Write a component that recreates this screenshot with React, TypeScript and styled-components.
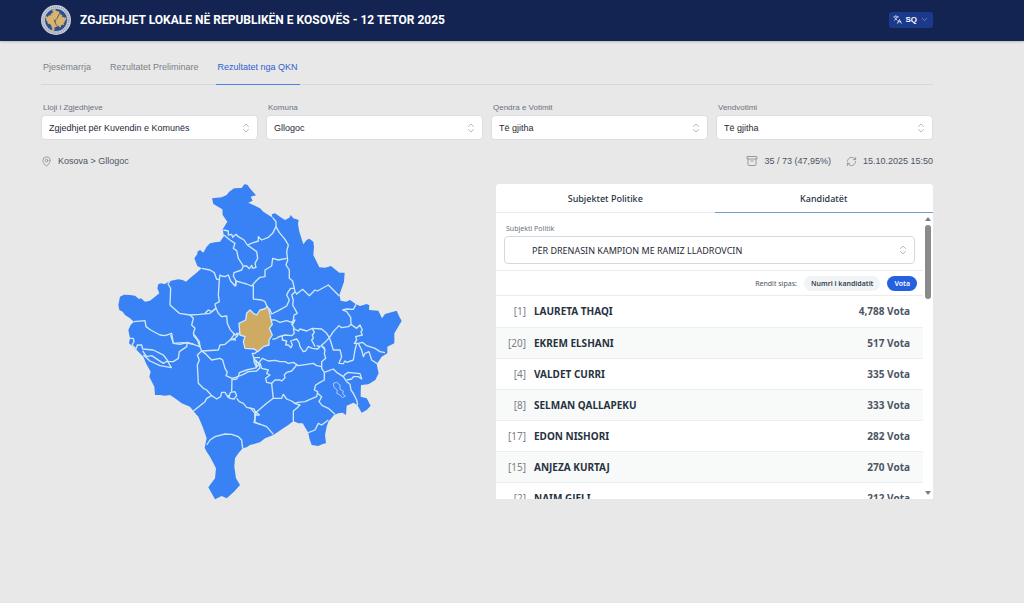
import React from "react";
import styled, { createGlobalStyle, css } from "styled-components";
import { Archive, ChevronDown, ChevronsUpDown, Languages, MapPin, RefreshCw } from "lucide-react";

const GlobalStyle = createGlobalStyle`
  *, *::before, *::after { box-sizing: border-box; }
  body {
    margin: 0;
    background: #e8e8e8;
    color: #1f2937;
    font-family: "Liberation Sans", Arial, sans-serif;
    font-size: 9px;
  }
  button, select { font: inherit; color: inherit; }
`;

const gutters = css`
  padding-left: 41px;
  padding-right: 91px;
`;

const Header = styled.header`
  ${gutters}
  display: flex;
  align-items: center;
  gap: 9px;
  height: 41px;
  padding-bottom: 2px;
  background: #142452;
  box-shadow: 0 1px 2px rgba(0, 0, 0, 0.2);
`;

const Logo = styled.svg`
  width: 30px;
  height: 30px;
  flex: none;
`;

const Title = styled.h1`
  margin: 0;
  flex: 1;
  color: #fff;
  font-family: Roboto, "Liberation Sans", sans-serif;
  font-size: 12px;
  line-height: 16px;
  font-weight: 700;
`;

const LanguageButton = styled.button`
  display: flex;
  align-items: center;
  gap: 3px;
  height: 16px;
  padding: 0 4px;
  border: 0;
  border-radius: 3px;
  background: #1c3a8c;
  color: #fff;
  font-size: 8px;
  font-weight: 700;
  svg:last-child { color: #7f93cf; }
`;

const Page = styled.main`
  ${gutters}
  padding-top: 12px;
`;

const Tabs = styled.nav`
  display: flex;
  gap: 15px;
  height: 32px;
  border-bottom: 1px solid #d6d8dc;
`;

const TabLink = styled.a<{ $active?: boolean }>`
  height: 32px;
  padding: 0 2px;
  line-height: 28px;
  text-decoration: none;
  color: ${(p) => (p.$active ? "#2f5fd0" : "#7b8087")};
  border-bottom: 1px solid ${(p) => (p.$active ? "#4f83e6" : "transparent")};
`;

const Filters = styled.div`
  display: grid;
  grid-template-columns: repeat(4, 1fr);
  gap: 8px;
  margin-top: 18px;
`;

const Field = styled.div`
  display: flex;
  flex-direction: column;
  gap: 2px;
`;

const FieldLabel = styled.label<{ $small?: boolean }>`
  padding-left: 2px;
  font-size: ${(p) => (p.$small ? 7 : 8)}px;
  line-height: 10px;
  color: #6b7280;
`;

const SelectBox = styled.div`
  position: relative;
  svg {
    position: absolute;
    right: 6px;
    top: 50%;
    margin-top: -6px;
    color: #9ca3af;
    pointer-events: none;
  }
`;

const Select = styled.select<{ $roomy?: boolean }>`
  display: block;
  appearance: none;
  width: 100%;
  height: ${(p) => (p.$roomy ? 28 : 25)}px;
  padding: 0 24px 0 ${(p) => (p.$roomy ? 27 : 7)}px;
  border: 1px solid ${(p) => (p.$roomy ? "#d5d8dd" : "#dcdee1")};
  border-radius: 4px;
  background: #fff;
`;

const InfoRow = styled.div`
  display: flex;
  align-items: center;
  gap: 15px;
  height: 16px;
  margin-top: 13px;
  color: #4b5563;
`;

const InfoItem = styled.span<{ $grow?: boolean }>`
  display: flex;
  align-items: center;
  gap: 6px;
  flex: ${(p) => (p.$grow ? 1 : "none")};
  svg { color: #7b8087; }
`;

const Results = styled.div`
  display: grid;
  grid-template-columns: 1fr 1fr;
  align-items: start;
  gap: 18px;
  margin-top: 15px;
`;

const MapFrame = styled.div`
  display: flex;
  justify-content: center;
  align-items: flex-start;
  svg { width: 300px; max-width: 100%; height: auto; }
`;

const Card = styled.section`
  border-radius: 4px 4px 0 0;
  overflow: hidden;
  background: #fff;
  font-family: "Noto Sans", sans-serif;
`;

const CardTabs = styled.div`
  display: grid;
  grid-template-columns: 1fr 1fr;
`;

const CardTab = styled.button<{ $active?: boolean }>`
  height: 29px;
  padding: 0;
  border: 0;
  border-bottom: 1px solid ${(p) => (p.$active ? "#6f9bd1" : "#e7e9ec")};
  background: #fff;
  color: #28323f;
  font-weight: 500;
`;

const Scroller = styled.div`
  display: flex;
  height: 286px;
`;

const ScrollContent = styled.div`
  flex: 1;
  overflow-y: auto;
  scrollbar-width: none;
`;

const ScrollTrack = styled.div`
  display: flex;
  flex-direction: column;
  align-items: center;
  width: 10px;
  padding: 4px 0;
`;

const Arrow = styled.span<{ $down?: boolean }>`
  border: 3px solid transparent;
  ${(p) => (p.$down ? "border-top: 4px solid #7d7d7d; border-bottom: 0; margin-top: auto;" : "border-bottom: 4px solid #7d7d7d; border-top: 0;")}
`;

const Thumb = styled.span`
  width: 6px;
  height: 74px;
  margin-top: 4px;
  border-radius: 3px;
  background: #8a8a8a;
`;

const SubjectField = styled(Field)`
  padding: 11px 8px 6px;
  border-bottom: 1px solid #e9ebed;
`;

const SortRow = styled.div`
  display: flex;
  align-items: center;
  justify-content: flex-end;
  gap: 7px;
  height: 25px;
  padding-right: 6px;
  border-bottom: 1px solid #e9ebed;
  font-size: 7px;
  color: #4b5563;
`;

const Pill = styled.button<{ $active?: boolean }>`
  height: 15px;
  padding: 0 7px;
  border: 0;
  border-radius: 8px;
  font-weight: 600;
  line-height: 15px;
  background: ${(p) => (p.$active ? "#2560e0" : "#f1f4f5")};
  color: ${(p) => (p.$active ? "#fff" : "#374151")};
`;

const Candidates = styled.table`
  width: 100%;
  border-collapse: collapse;
  font-size: 10px;
`;

const CandidateRow = styled.tr`
  height: 31px;
  border-bottom: 1px solid #eceff0;
  &:nth-child(even) { background: #f8faf9; }
`;

const NumberCell = styled.td`
  width: 30px;
  padding: 0;
  text-align: right;
  color: #7b8087;
`;

const NameCell = styled.th`
  padding: 0 8px;
  text-align: left;
  font-weight: 700;
  color: #28323f;
`;

const VotesCell = styled.td`
  padding: 0 13px 0 0;
  text-align: right;
  font-weight: 700;
  color: #4b5563;
`;

const OUTLINE =
  "306,55 335,52 350,45 357,36 372,25 395,24 403,13 412,14 422,28 438,46 422,50 428,62 415,68 430,75 450,85 460,95 488,113 " +
  "485,103 495,100 512,112 525,120 538,113 542,105 550,115 566,120 564,132 568,155 580,193 590,180 598,176 610,185 612,200 610,225 628,262 645,263 663,258 " +
  "688,278 704,278 702,305 688,345 692,362 708,365 720,360 738,373 750,378 770,372 778,376 777,390 805,392 816,415 825,402 860,392 868,410 " +
  "875,423 862,445 853,460 853,490 832,500 832,520 815,530 800,553 806,580 796,600 775,613 753,615 752,635 752,650 770,655 782,677 770,690 755,698 " +
  "742,675 730,668 720,673 710,677 708,705 698,698 685,700 672,705 655,725 650,740 645,765 648,790 638,792 625,798 605,795 598,775 595,758 578,730 565,730 " +
  "550,723 535,735 520,745 490,765 465,775 450,787 420,795 410,802 398,805 385,820 375,835 373,860 378,895 390,915 372,935 350,955 335,948 315,958 " +
  "305,940 295,922 315,895 318,865 308,845 300,830 290,815 284,803 290,775 278,740 265,710 250,693 240,680 215,670 195,655 180,645 165,647 150,645 135,645 " +
  "133,620 118,590 122,575 108,550 100,530 80,510 57,490 60,475 55,450 62,435 72,425 60,415 45,405 38,395 28,390 25,375 30,350 42,344 60,345 75,347 88,358 " +
  "92,354 105,365 120,362 135,350 148,340 142,325 145,312 155,310 163,313 180,303 205,298 218,300 228,305 245,290 258,280 275,265 262,258 253,235 262,222 262,215 " +
  "270,210 280,218 290,200 300,190 315,187 330,185 342,168 338,148 352,125 338,105 337,88 310,72";

const SELECTED =
  "420,390 430,400 440,405 450,390 463,387 473,380 478,395 483,420 487,433 478,445 487,465 477,480 477,495 460,500 443,515 433,507 405,505 400,485 405,470 390,465 387,430 407,420 410,400";

/* Municipal borders, grouped by the part of the country they run through. */
const BORDERS: { x: number; y: number; lines: string[] }[] = [
  {
    x: 0,
    y: 0,
    lines: [
      "340,150 355,153 355,165 365,163 368,172 378,163 385,170 402,180 412,195",
      "412,195 430,188 445,183 445,170 455,180 475,172 488,160 498,140 498,125 488,113",
      "342,165 360,180 375,190 370,205 380,212 385,235 400,258",
      "412,195 440,215 443,235 435,250 438,262 428,265 425,256 418,266 410,258 400,258",
      "400,258 395,270 372,278 370,288 378,303 378,318",
      "275,265 300,270 313,278 320,298 328,298 330,285 335,288 345,290 355,285 362,303 375,318 378,303 395,308 410,312 425,318 438,303 450,292 465,290 465,270 485,258 488,235 505,240 530,235",
      "430,315 430,357 455,360 465,365 472,382",
      "180,303 174,312 182,325 180,375 208,400 240,405 268,403 300,400 318,385 315,372 328,365 325,345 328,298",
      "72,425 105,422 108,440 122,450 150,465 165,467 185,460 190,490",
      "240,405 250,415 245,435 255,445 250,460 268,485 270,500",
      "318,385 325,400 335,410 350,408 352,430 360,448 375,465 390,460",
      "285,400 295,390 305,395 318,385",
      "375,460 362,478 378,480",
      "378,460 400,460 403,468",
      "190,490 220,488 250,492",
    ],
  },
  {
    x: 420,
    y: 0,
    lines: [
      "78,140 88,158 105,178 115,195 110,215 113,240 108,255 118,270 118,295 128,303 135,335",
      "135,325 122,325 115,335 110,345 118,360 110,378 85,392 65,402 58,385",
      "135,335 140,342 158,328 178,347 195,330 202,333 235,315 268,348",
      "135,335 125,345 130,360 128,375 142,400 132,405 130,420 125,435",
      "318,373 310,388 290,387 278,390 290,395 302,412 303,433",
    ],
  },
  {
    x: 345,
    y: 315,
    lines: [
      "138,105 150,105 165,112 185,107 200,112 210,105 202,120 208,130",
      "142,163 155,160 160,156 180,150 200,152 208,145 205,130",
      "172,152 172,165 185,168 182,180 190,180 198,188 202,180 197,168 205,165 215,162 222,172 225,185 235,200 242,198 250,185 262,190 278,192 285,185 275,182",
      "205,130 220,138 225,132 245,138 262,130 290,132 305,145 313,158 300,172 288,182 300,190",
      "262,130 268,142 262,150 265,160 260,165 270,185",
      "313,158 325,140 342,122 350,128 370,125 378,118",
      "378,118 395,130 405,120 412,135 408,140 412,150 392,155 395,165 388,175 400,175 412,172 425,182 450,190 465,200 480,203",
      "395,175 390,195 385,225 365,232 360,228 355,236 342,235 350,215 345,195 325,195 318,172 313,158",
      "290,182 300,195 298,205 302,220 290,230 290,250 298,262",
      "400,175 410,195 415,215 420,205 432,200 440,225 460,238",
      "98,198 90,205 82,205 88,225 100,235 112,220 130,228 150,226 165,230 180,230 190,235 205,232 220,242 265,235 275,242 290,245",
      "100,235 92,225 95,245 105,235 110,250 130,255 125,265 135,270 122,280 125,292 140,295 150,285 165,285 170,288 180,278 178,270 185,262 200,258 215,240",
      "100,235 105,248 95,258 70,260 55,268 38,275 35,282 22,284",
      "140,295 142,315 145,340 170,340 175,328 185,342 200,348 210,355 218,352 240,350 255,343 275,335 278,320 268,315 272,300 285,292 298,285 298,262",
      "208,355 225,360 215,370 205,378 205,408",
      "298,262 312,257 325,252 335,262 355,275 365,290 375,298 378,315 385,325 395,345 398,360",
      "355,275 360,268 370,262 405,266 410,282 400,275 385,275 380,282 365,285",
      "278,325 290,335 282,350 292,362 310,370 330,388",
      "145,340 125,355 90,385 90,412 125,425 145,448",
      "75,368 90,385",
      "250,443 270,435 280,415 290,420 310,405",
    ],
  },
  {
    x: 0,
    y: 465,
    lines: [
      "57,10 70,10 72,20 66,30 78,42 82,30 95,30 98,42 130,45 150,55 160,60 175,80 190,80 205,70 208,50 230,35 232,22 210,28 190,25 182,0",
      "98,48 110,65 125,62 160,85 172,78 184,98 150,92 120,78 100,60",
      "232,22 250,28 270,35 262,15 250,0",
      "270,35 275,48 262,60 268,75 262,90 265,145 280,160 290,165 305,182 290,190 285,200 250,228",
      "305,182 320,192 332,185 335,172 345,172 355,188 362,172 375,170 380,182 372,192 360,190 355,180",
      "365,170 366,130 348,122 352,112 345,100 338,75 330,70 305,75 285,55 275,48",
      "275,48 325,45 330,30 345,28 360,15 375,10 385,0",
      "380,190 388,200 400,205 410,217 432,222 438,235 432,262 450,268",
      "432,240 448,240 435,228",
      "290,330 300,315 315,305 345,297 365,298 385,305 395,315 398,340",
    ],
  },
];

const LAKE = "670,610 680,607 690,615 690,628 700,633 698,642 706,648 698,653 690,645 680,640 682,630 672,622";

function KosovoMap() {
  return (
    <svg viewBox="0 12 900 963" role="img" aria-label="Harta e komunave">
      <polygon points={OUTLINE} fill="#3982f5" />
      <g fill="none" stroke="#cfe8f8" strokeWidth="4" strokeLinejoin="round">
        {BORDERS.map((group, i) => (
          <g key={i} transform={`translate(${group.x} ${group.y})`}>
            {group.lines.map((line) => (
              <polyline key={line} points={line} />
            ))}
          </g>
        ))}
        <polyline points="366,595 385,590 388,578 410,570 440,563 432,545 434,533 450,533" />
        <polygon points={LAKE} strokeWidth="3" stroke="#a9cdf9" />
        <polygon points={SELECTED} fill="#cfaa63" />
      </g>
    </svg>
  );
}

function Emblem() {
  return (
    <Logo viewBox="0 0 60 60" role="img" aria-label="KQZ">
      <circle cx="30" cy="30" r="30" fill="#c9ced6" />
      <circle cx="30" cy="30" r="26" fill="none" stroke="#8f9ab0" strokeWidth="3" strokeDasharray="2 2" />
      <circle cx="30" cy="30" r="23" fill="#2d4f8f" stroke="#f0f2f5" strokeWidth="1" />
      <g transform="translate(8 8) scale(0.048 0.045)">
        <polygon points={OUTLINE} fill="#d8b46e" stroke="#d8b46e" strokeWidth="40" />
      </g>
      <path d="M37 17 L32 27 L27 32 L31 41 M26 29 L30 34" fill="none" stroke="#5c5c62" strokeWidth="2" />
    </Logo>
  );
}

const FILTERS = [
  { id: "lloji", label: "Lloji i Zgjedhjeve", value: "Zgjedhjet për Kuvendin e Komunës" },
  { id: "komuna", label: "Komuna", value: "Gllogoc" },
  { id: "qendra", label: "Qendra e Votimit", value: "Të gjitha" },
  { id: "vendvotimi", label: "Vendvotimi", value: "Të gjitha" },
];

const CANDIDATES = [
  { no: 1, name: "LAURETA THAQI", votes: "4,788" },
  { no: 20, name: "EKREM ELSHANI", votes: "517" },
  { no: 4, name: "VALDET CURRI", votes: "335" },
  { no: 8, name: "SELMAN QALLAPEKU", votes: "333" },
  { no: 17, name: "EDON NISHORI", votes: "282" },
  { no: 15, name: "ANJEZA KURTAJ", votes: "270" },
  { no: 2, name: "NAIM GJELI", votes: "212" },
];

function SelectField({ id, value, roomy }: { id: string; value: string; roomy?: boolean }) {
  return (
    <SelectBox>
      <Select id={id} $roomy={roomy} defaultValue={value}>
        <option value={value}>{value}</option>
      </Select>
      <ChevronsUpDown size={12} strokeWidth={1.5} />
    </SelectBox>
  );
}

export default function App() {
  return (
    <>
      <GlobalStyle />
      <Header>
        <Emblem />
        <Title>ZGJEDHJET LOKALE NË REPUBLIKËN E KOSOVËS - 12 TETOR 2025</Title>
        <LanguageButton type="button">
          <Languages size={9} />
          SQ
          <ChevronDown size={9} />
        </LanguageButton>
      </Header>
      <Page>
        <Tabs>
          <TabLink href="#pjesemarrja">Pjesëmarrja</TabLink>
          <TabLink href="#preliminare">Rezultatet Preliminare</TabLink>
          <TabLink href="#qkn" $active>Rezultatet nga QKN</TabLink>
        </Tabs>
        <Filters>
          {FILTERS.map((f) => (
            <Field key={f.id}>
              <FieldLabel htmlFor={f.id}>{f.label}</FieldLabel>
              <SelectField id={f.id} value={f.value} />
            </Field>
          ))}
        </Filters>
        <InfoRow>
          <InfoItem $grow>
            <MapPin size={11} strokeWidth={1.5} />
            Kosova &gt; Gllogoc
          </InfoItem>
          <InfoItem>
            <Archive size={12} strokeWidth={1.5} />
            35 / 73 (47,95%)
          </InfoItem>
          <InfoItem>
            <RefreshCw size={11} strokeWidth={1.5} />
            15.10.2025 15:50
          </InfoItem>
        </InfoRow>
        <Results>
          <MapFrame>
            <KosovoMap />
          </MapFrame>
          <Card>
            <CardTabs>
              <CardTab type="button">Subjektet Politike</CardTab>
              <CardTab type="button" $active>Kandidatët</CardTab>
            </CardTabs>
            <Scroller>
              <ScrollContent>
                <SubjectField>
                  <FieldLabel htmlFor="subjekti" $small>Subjekti Politik</FieldLabel>
                  <SelectField id="subjekti" value="PËR DRENASIN KAMPION ME RAMIZ LLADROVCIN" roomy />
                </SubjectField>
                <SortRow>
                  <span>Rendit sipas:</span>
                  <Pill type="button">Numri i kandidatit</Pill>
                  <Pill type="button" $active>Vota</Pill>
                </SortRow>
                <Candidates>
                  <tbody>
                    {CANDIDATES.map((c) => (
                      <CandidateRow key={c.no}>
                        <NumberCell>[{c.no}]</NumberCell>
                        <NameCell scope="row">{c.name}</NameCell>
                        <VotesCell>{c.votes} Vota</VotesCell>
                      </CandidateRow>
                    ))}
                  </tbody>
                </Candidates>
              </ScrollContent>
              <ScrollTrack aria-hidden="true">
                <Arrow />
                <Thumb />
                <Arrow $down />
              </ScrollTrack>
            </Scroller>
          </Card>
        </Results>
      </Page>
    </>
  );
}
